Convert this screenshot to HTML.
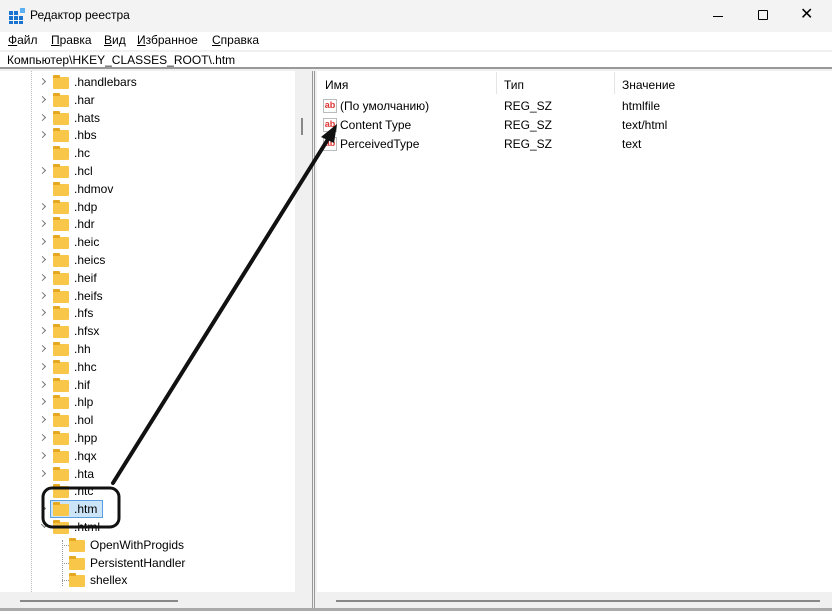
<!DOCTYPE html>
<html><head><meta charset="utf-8"><style>
*{margin:0;padding:0;box-sizing:border-box}
body{width:832px;height:611px;overflow:hidden;background:#f0f0f0;font-family:"Segoe UI","Liberation Sans","DejaVu Sans",sans-serif;font-size:12px;color:#000;position:relative}
.abs{position:absolute}
.title{left:0;top:0;width:832px;height:32px;background:#f3f3f3}
.menu{left:0;top:32px;width:832px;height:18px;background:#fff}
.menu span{position:absolute;top:1px}
.addr{left:0;top:52px;width:832px;height:17px;background:#fff;border-bottom:2px solid #999}
.left{left:0;top:71px;width:295px;height:521px;background:#fff}
.right{left:317px;top:71px;width:515px;height:521px;background:#fff}
.row{position:absolute;height:18px;line-height:18px;white-space:nowrap}
.fold{position:absolute;width:16px;height:12px;background:#f8c648;border-radius:1px}
.fold:before{content:"";position:absolute;left:0;top:-2px;width:7px;height:3px;background:#e5a820;border-radius:1px 1px 0 0}
.chev{position:absolute;width:5px;height:5px;border-right:1px solid #777;border-bottom:1px solid #777;transform:rotate(-45deg)}
.ab{position:absolute;width:14px;height:14px;border:1px solid #bbb;background:#fff;color:#d33;font-size:9px;font-weight:bold;line-height:10px;text-align:center}
</style></head><body>
<div class="abs title"></div>
<svg class="abs" style="left:9px;top:8px" width="16" height="16"><g fill="#1a73d0"><rect x="0" y="3" width="4" height="4"/><rect x="5" y="3" width="4" height="4"/><rect x="0" y="8" width="4" height="4"/><rect x="5" y="8" width="4" height="4"/><rect x="10" y="8" width="4" height="4"/><rect x="0" y="13" width="4" height="3"/><rect x="5" y="13" width="4" height="3"/><rect x="10" y="13" width="4" height="3"/></g><rect x="11" y="0" width="5" height="5" fill="#5ab0f0"/></svg>
<div class="abs" style="left:30px;top:8px;font-size:12px">Редактор реестра</div>
<div class="abs" style="left:713px;top:16px;width:10px;height:1px;background:#000"></div>
<div class="abs" style="left:758px;top:10px;width:10px;height:10px;border:1px solid #000;border-radius:1px"></div>
<div class="abs" style="left:800px;top:7px;font-size:16px;line-height:16px">✕</div>
<div class="abs menu"><span style="left:8px"><u>Ф</u>айл</span><span style="left:51px"><u>П</u>равка</span><span style="left:104px"><u>В</u>ид</span><span style="left:137px"><u>И</u>збранное</span><span style="left:212px"><u>С</u>правка</span></div>
<div class="abs addr"><span style="position:absolute;left:7px;top:1px">Компьютер\HKEY_CLASSES_ROOT\.htm</span></div>
<div class="abs left"></div>
<div class="abs" style="left:31px;top:71px;height:521px;border-left:1px dotted #bbb"></div>
<div class="abs" style="left:301px;top:118px;width:2px;height:17px;background:#888"></div>
<div class="abs" style="left:312px;top:71px;width:3px;height:540px;border-left:1px solid #999;border-right:1px solid #999"></div>
<div class="abs" style="left:20px;top:600px;width:158px;height:2px;background:#888"></div>
<div class="abs right"></div>
<div class="abs" style="left:336px;top:600px;width:484px;height:2px;background:#888"></div>
<div class="abs" style="left:0;top:608px;width:832px;height:3px;background:#aaa"></div>
<div class="abs" style="left:496px;top:72px;width:1px;height:22px;background:#e5e5e5"></div>
<div class="abs" style="left:614px;top:72px;width:1px;height:22px;background:#e5e5e5"></div>
<div class="row" style="left:325px;top:76px">Имя</div>
<div class="row" style="left:504px;top:76px">Тип</div>
<div class="row" style="left:622px;top:76px">Значение</div>
<div class="ab" style="left:323px;top:99px">ab</div><div class="row" style="left:340px;top:97px">(По умолчанию)</div><div class="row" style="left:504px;top:97px">REG_SZ</div><div class="row" style="left:622px;top:97px">htmlfile</div>
<div class="ab" style="left:323px;top:118px">ab</div><div class="row" style="left:340px;top:116px">Content Type</div><div class="row" style="left:504px;top:116px">REG_SZ</div><div class="row" style="left:622px;top:116px">text/html</div>
<div class="ab" style="left:323px;top:137px">ab</div><div class="row" style="left:340px;top:135px">PerceivedType</div><div class="row" style="left:504px;top:135px">REG_SZ</div><div class="row" style="left:622px;top:135px">text</div>
<div id="tree"></div>
<script>
var n=[".handlebars",".har",".hats",".hbs",".hc",".hcl",".hdmov",".hdp",".hdr",".heic",".heics",".heif",".heifs",".hfs",".hfsx",".hh",".hhc",".hif",".hlp",".hol",".hpp",".hqx",".hta",".htc",".htm",".html"];
var noch={".hc":1,".hdmov":1,".htc":1};var h="";
for(var i=0;i<n.length;i++){var y=73+i*17.8;
if(!noch[n[i]]&&i<25)h+='<div class="chev" style="left:40px;top:'+(y+6)+'px"></div>';
if(i==25)h+='<div class="chev" style="left:42px;top:'+(y+4)+'px;transform:rotate(45deg)"></div>';
if(n[i]==".htm")h+='<div class="abs" style="left:50px;top:'+(y)+'px;width:53px;height:18px;background:#cce4f7;border:1px solid #5aa0e0"></div>';
h+='<div class="fold" style="left:53px;top:'+(y+4)+'px"></div><div class="row" style="left:74px;top:'+y+'px">'+n[i]+'</div>';}
var c=["OpenWithProgids","PersistentHandler","shellex"];
for(var j=0;j<3;j++){var y=73+(26+j)*17.8;h+='<div class="abs" style="left:62px;top:'+(y+9)+'px;width:7px;border-top:1px dotted #999"></div><div class="fold" style="left:69px;top:'+(y+4)+'px"></div><div class="row" style="left:90px;top:'+y+'px">'+c[j]+'</div>';}
h+='<div class="abs" style="left:62px;top:540px;height:46px;border-left:1px dotted #999"></div>';
document.getElementById('tree').innerHTML=h;
</script>
<svg class="abs" style="left:0;top:0" width="832" height="611">
<rect x="43" y="488" width="76" height="39" rx="9" fill="none" stroke="#111" stroke-width="3"/>
<line x1="113" y1="483" x2="330" y2="136" stroke="#111" stroke-width="4" stroke-linecap="round"/>
<polygon points="337,124 321,137 334,143" fill="#111"/>
</svg>
</body></html>
